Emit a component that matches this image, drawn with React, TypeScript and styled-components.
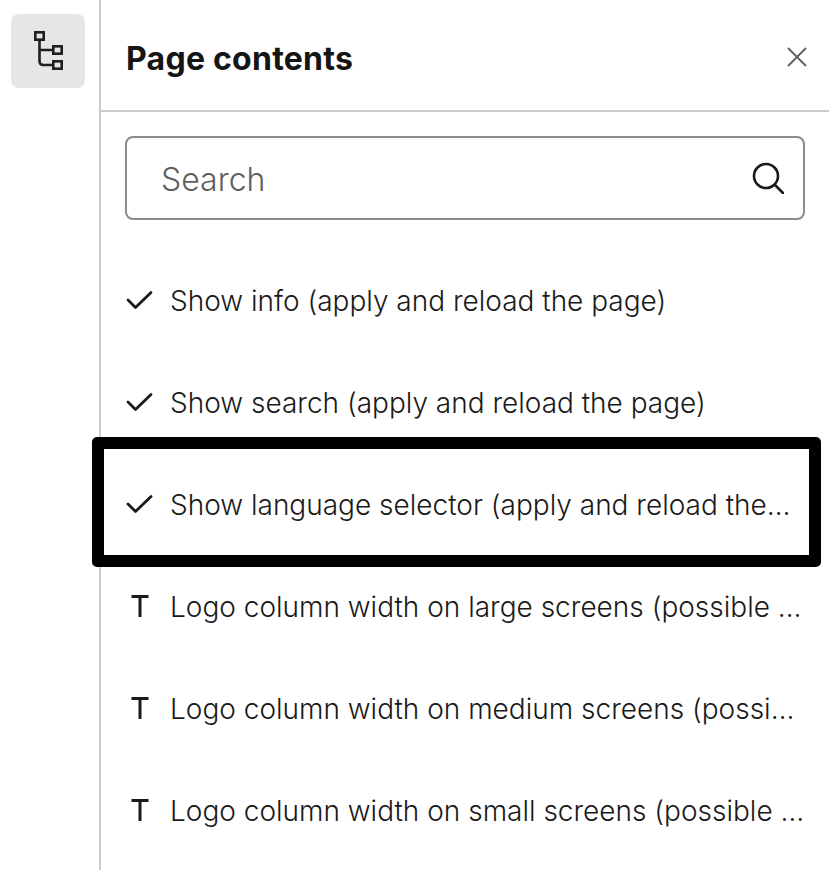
import React from "react";
import styled, { createGlobalStyle } from "styled-components";

const Global = createGlobalStyle`
  html, body { margin: 0; padding: 0; background: #fff; }
  body { font-family: "Inter", "Liberation Sans", sans-serif; color: #1a1a1a; }
`;

const Page = styled.div`
  display: flex;
  width: 829px;
  height: 870px;
  overflow: hidden;
`;

const Rail = styled.div`
  flex: none;
  width: 101px;
  padding: 14px 0 0 11px;
  box-sizing: border-box;
  border-right: 2px solid #cccccc;
`;

const RailButton = styled.div`
  width: 74px;
  height: 74px;
  border-radius: 8px;
  background: #e6e6e6;
  display: flex;
  align-items: center;
  justify-content: center;
`;

const Panel = styled.div`
  flex: 1;
  min-width: 0;
  display: flex;
  flex-direction: column;
`;

const Header = styled.div`
  height: 110px;
  flex: none;
  border-bottom: 2px solid #cccccc;
  display: flex;
  align-items: center;
  justify-content: space-between;
  padding: 0 22px 0 25px;
`;

const Title = styled.h2`
  margin: 7px 0 0;
  font-size: 32px;
  font-weight: 700;
  letter-spacing: 0.25px;
  color: #151515;
`;

const CloseSlot = styled.span`
  display: flex;
  margin-top: 3px;
`;

const SearchBox = styled.div`
  margin: 24px 24px 0;
  height: 84px;
  box-sizing: border-box;
  border: 2px solid #8c8c8c;
  border-radius: 8px;
  display: flex;
  align-items: center;
  justify-content: space-between;
  padding: 0 19px 0 35px;
`;

const Placeholder = styled.span`
  font-size: 32px;
  font-weight: 300;
  margin: 2px 0 0 -1px;
  color: #5f5f5f;
`;

const List = styled.div`
  margin-top: 29px;
  display: flex;
  flex-direction: column;
`;

const Row = styled.div<{ $highlight?: boolean }>`
  position: relative;
  height: 102px;
  display: flex;
  align-items: center;
  padding-left: 25px;
  gap: 17px;
  ${(p) =>
    p.$highlight &&
    `
    &::after {
      content: "";
      position: absolute;
      left: -9px;
      right: 8px;
      top: -16px;
      bottom: -12px;
      border: 12px solid #000;
      border-radius: 5px;
      box-sizing: border-box;
    }
  `}
`;

const RowIcon = styled.span`
  flex: none;
  width: 27px;
  height: 27px;
  display: flex;
  align-items: center;
  justify-content: center;
`;

const Label = styled.span`
  font-size: 28px;
  font-weight: 300;
  margin-top: 1px;
  white-space: nowrap;
  color: #1a1a1a;
`;

const TreeIcon = () => (
  <svg width="32" height="42" viewBox="0 0 32 42" fill="none" stroke="#1f1f1f" strokeWidth="2.6">
    <rect x="3.3" y="2.3" width="8.4" height="7.4" />
    <rect x="21.3" y="16.3" width="8.4" height="7.4" />
    <rect x="21.3" y="31.3" width="8.4" height="7.4" />
    <path d="M7.5 10V31Q7.5 35 11.5 35H21M7.5 20H21" />
  </svg>
);

const CloseIcon = () => (
  <svg width="20" height="20" viewBox="0 0 20 20" fill="none" stroke="#5f5f5f" strokeWidth="1.8">
    <path d="M1 1L19 19M19 1L1 19" />
  </svg>
);

const SearchIcon = () => (
  <svg width="32" height="32" viewBox="0 0 32 32" fill="none" stroke="#1a1a1a" strokeWidth="2.6" strokeLinecap="round">
    <circle cx="14" cy="14" r="12" />
    <path d="M23 23L31 31" />
  </svg>
);

const CheckIcon = () => (
  <svg width="27" height="20" viewBox="0 0 27 20" fill="none" stroke="#1a1a1a" strokeWidth="2.8" strokeLinecap="round" strokeLinejoin="round">
    <path d="M2 10L9.5 17.5L25 2.5" />
  </svg>
);

const TextIcon = () => (
  <svg width="18" height="22" viewBox="0 0 18 22" fill="none" stroke="#1a1a1a" strokeWidth="3">
    <path d="M0.5 1.5H17.5M9 1.5V22" />
  </svg>
);

const rows: { kind: "check" | "text"; label: string; highlight?: boolean }[] = [
  { kind: "check", label: "Show info (apply and reload the page)" },
  { kind: "check", label: "Show search (apply and reload the page)" },
  { kind: "check", label: "Show language selector (apply and reload the…", highlight: true },
  { kind: "text", label: "Logo column width on large screens (possible …" },
  { kind: "text", label: "Logo column width on medium screens (possi…" },
  { kind: "text", label: "Logo column width on small screens (possible …" },
];

export default function App() {
  return (
    <Page>
      <Global />
      <Rail>
        <RailButton>
          <TreeIcon />
        </RailButton>
      </Rail>
      <Panel>
        <Header>
          <Title>Page contents</Title>
          <CloseSlot>
            <CloseIcon />
          </CloseSlot>
        </Header>
        <SearchBox>
          <Placeholder>Search</Placeholder>
          <SearchIcon />
        </SearchBox>
        <List>
          {rows.map((r) => (
            <Row key={r.label} $highlight={r.highlight}>
              <RowIcon>{r.kind === "check" ? <CheckIcon /> : <TextIcon />}</RowIcon>
              <Label>{r.label}</Label>
            </Row>
          ))}
        </List>
      </Panel>
    </Page>
  );
}
